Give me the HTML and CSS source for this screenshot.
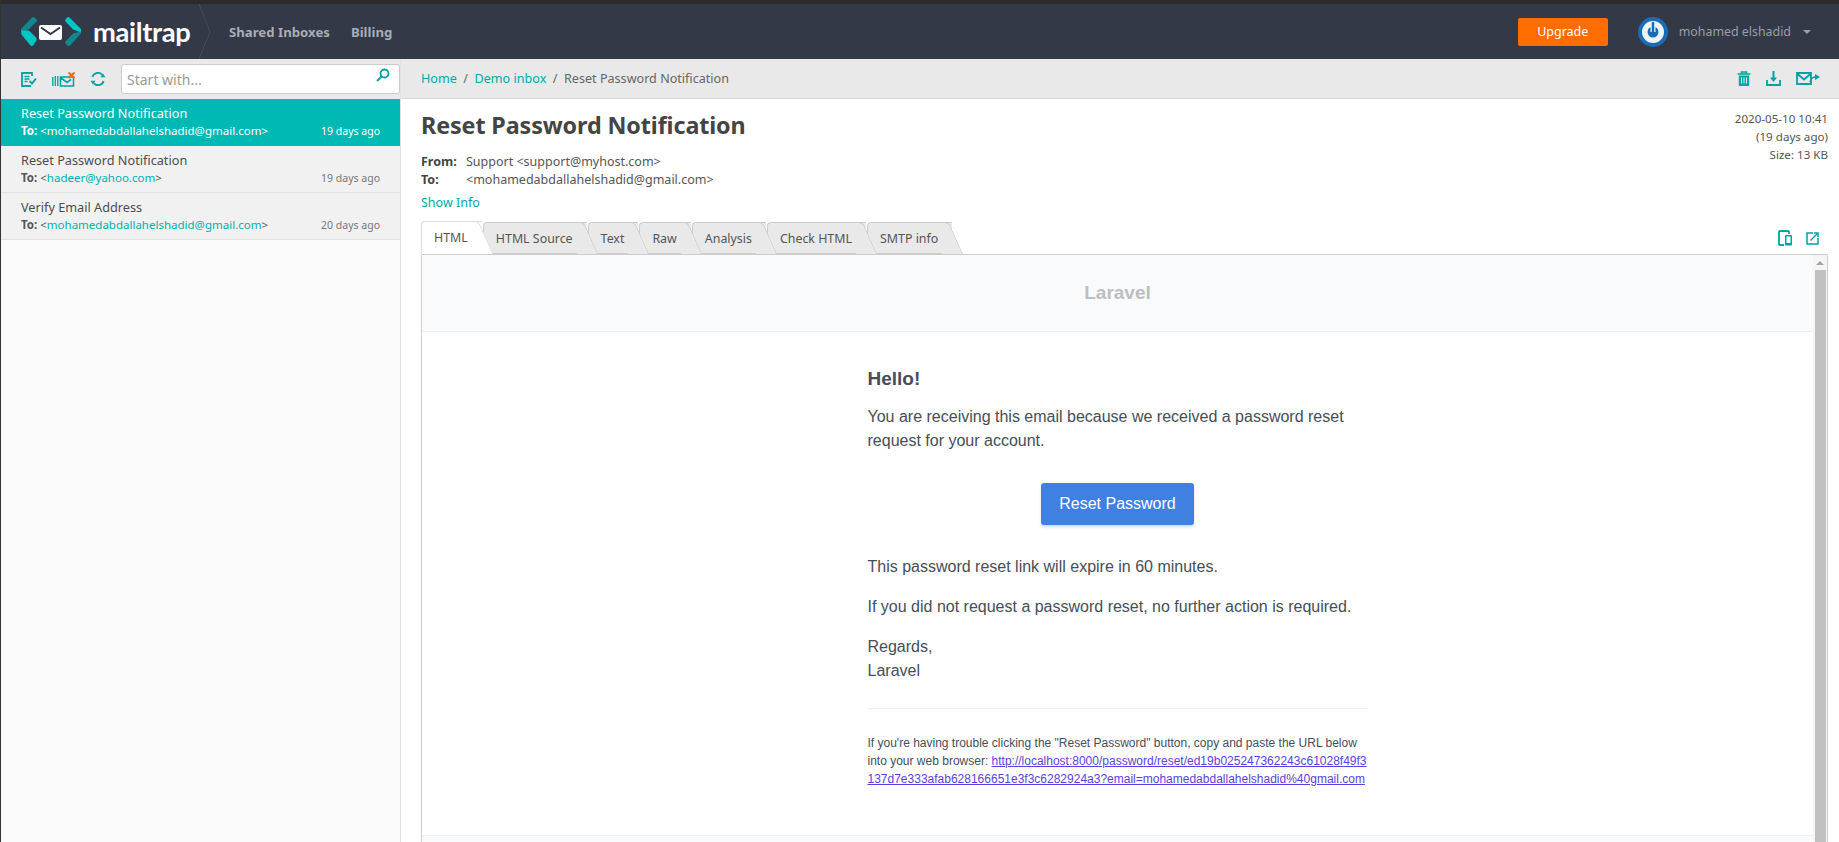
FILE: index.html
```html
<!DOCTYPE html>
<html lang="en">
<head>
  <meta charset="UTF-8">
  <title>Mailtrap</title>
  <link rel="stylesheet" href="styles.css">
</head>
<body>
  <header class="topbar">
    <a class="logo" href="#">
      <svg width="61" height="30" viewBox="0 0 61 30">
        <path d="M11 .5q1.500-1 2.500 0l2 2q1 1 0 2L8 12 1.500 15.500 0 13v-1z" fill="#12878f"/>
        <path d="M0 12l8 0 7.500 7.500 0 2q0 1-1 2l-2.500 3.500q-1 1-2.500 0L.5 16z" fill="#00c6c6" transform="translate(0 1.500)"/>
        <rect x="18" y="8" width="23" height="15" rx="2" fill="#fff"/>
        <path d="M20 10.500l9.500 6.500 9.500-6.500" fill="none" stroke="#333947" stroke-width="2"/>
        <path d="M48.500.5q-1.500-1-2.500 0l-1.500 2q-1 1 0 2L52 12.500 60 15.500V12z" fill="#00c6c6"/>
        <path d="M60 14.500v2L49 28.500q-1 1-2.500 0l-2-2q-1-1 0-2L52 16.500z" fill="#12878f"/>
      </svg>
      <span class="logo-text">mailtrap</span>
    </a>
    <svg class="logo-chevron" width="12" height="55" viewBox="0 0 12 55"><path d="M0 0l11 28-11 27" fill="none" stroke="#474d5b"/></svg>
    <nav class="topnav">
      <a href="#">Shared Inboxes</a>
      <a href="#">Billing</a>
    </nav>
    <div class="topbar-right">
      <a class="upgrade" href="#">Upgrade</a>
      <svg class="avatar" width="30" height="30" viewBox="0 0 30 30">
        <circle cx="15" cy="15" r="15" fill="#1c6cb5"/>
        <circle cx="15" cy="15" r="11" fill="#eef5fa"/>
        <circle cx="15" cy="15" r="5.500" fill="#1c6cb5"/>
        <path d="M15 6v9" stroke="#eef5fa" stroke-width="5"/>
        <path d="M15 5v10" stroke="#1c6cb5" stroke-width="2.500"/>
      </svg>
      <span class="username">mohamed elshadid</span>
      <span class="caret"></span>
    </div>
  </header>

  <div class="layout">
    <aside class="sidebar">
      <div class="side-tools">
        <svg width="16" height="15" viewBox="0 0 16 15" class="tool"><path d="M11 4V1H1v13h9" fill="none" stroke="#00a3a3" stroke-width="1.800"/><path d="M3.500 4.500h5M3.500 7h5M3.500 9.500h3" stroke="#00a3a3" stroke-width="1.300"/><path d="M8.500 9l2.500 2.500 4-5" fill="none" stroke="#00a3a3" stroke-width="2"/></svg>
        <svg width="23" height="15" viewBox="0 0 23 15" class="tool"><path d="M.8 5v9M3.300 4v10M5.800 4v10" stroke="#00a3a3" stroke-width="1.300"/><path d="M8.500 5h13v9h-13zM8.500 5.500l6.500 5 4-3" fill="none" stroke="#00a3a3" stroke-width="1.600"/><path d="M16.500.5l6 5.500M22.500.5l-6 5.500" stroke="#f56a00" stroke-width="2"/></svg>
        <svg width="16" height="14" viewBox="0 0 16 14" class="tool"><path d="M2.500 5a5.500 5 0 0 1 9.500-2.500M13.500 9a5.500 5 0 0 1-9.500 2.500" fill="none" stroke="#00a3a3" stroke-width="1.800"/><path d="M10.500 5.200h5l-2.500-3.700zM5.500 8.800h-5l2.500 3.700z" fill="#00a3a3"/></svg>
        <div class="search">
          <input type="text" placeholder="Start with...">
          <svg width="14" height="14" viewBox="0 0 14 14"><circle cx="8.500" cy="5.500" r="4" fill="none" stroke="#00a3a3" stroke-width="1.800"/><path d="M5.500 8.500L1 13" stroke="#00a3a3" stroke-width="2"/></svg>
        </div>
      </div>
      <ul class="msg-list">
        <li class="msg active">
          <div class="msg-subject">Reset Password Notification</div>
          <div class="msg-meta"><span><b>To:</b> &lt;<a href="#">mohamedabdallahelshadid@gmail.com</a>&gt;</span><time>19 days ago</time></div>
        </li>
        <li class="msg">
          <div class="msg-subject">Reset Password Notification</div>
          <div class="msg-meta"><span><b>To:</b> &lt;<a href="#">hadeer@yahoo.com</a>&gt;</span><time>19 days ago</time></div>
        </li>
        <li class="msg">
          <div class="msg-subject">Verify Email Address</div>
          <div class="msg-meta"><span><b>To:</b> &lt;<a href="#">mohamedabdallahelshadid@gmail.com</a>&gt;</span><time>20 days ago</time></div>
        </li>
      </ul>
    </aside>

    <main class="main">
      <div class="crumbs">
        <div class="crumb-links"><a href="#">Home</a><i>/</i><a href="#">Demo inbox</a><i>/</i><span>Reset Password Notification</span></div>
        <div class="crumb-tools">
          <svg width="14" height="15" viewBox="0 0 14 15"><path d="M.5 3h13M4.500 2.500V1h5v1.500" fill="none" stroke="#00a3a3" stroke-width="1.600"/><path d="M1.800 4.500h10.400V14q0 1-1 1H2.800q-1 0-1-1z" fill="#00a3a3"/><path d="M4.500 6.500v6M7 6.500v6M9.500 6.500v6" stroke="#d8eeee" stroke-width="1.100"/></svg>
          <svg width="15" height="15" viewBox="0 0 15 15"><path d="M1 9v5h13V9" fill="none" stroke="#00a3a3" stroke-width="1.800"/><path d="M7.500 0v8" stroke="#00a3a3" stroke-width="2"/><path d="M4 6.500h7l-3.500 4.500z" fill="#00a3a3"/></svg>
          <svg width="24" height="13" viewBox="0 0 24 13"><path d="M1 1h14v11H1zM1 1.500l7 6 7-6" fill="none" stroke="#00a3a3" stroke-width="1.800"/><path d="M14 10c1-4 3-5 6-5" fill="none" stroke="#00a3a3" stroke-width="1.500"/><path d="M19 2l5 3-5 3z" fill="#00a3a3"/></svg>
        </div>
      </div>

      <div class="message">
        <div class="msg-head">
          <div>
            <h1>Reset Password Notification</h1>
            <table class="addr">
              <tr><th>From:</th><td>Support &lt;support@myhost.com&gt;</td></tr>
              <tr><th>To:</th><td>&lt;mohamedabdallahelshadid@gmail.com&gt;</td></tr>
            </table>
            <a class="show-info" href="#">Show Info</a>
          </div>
          <div class="msg-date">2020-05-10 10:41<br>(19 days ago)<br>Size: 13 KB</div>
        </div>

        <div class="tab-row">
          <ul class="tabs">
            <li class="tab current">HTML</li>
            <li class="tab">HTML Source</li>
            <li class="tab">Text</li>
            <li class="tab">Raw</li>
            <li class="tab">Analysis</li>
            <li class="tab">Check HTML</li>
            <li class="tab">SMTP info</li>
          </ul>
          <div class="tab-tools">
            <svg width="15" height="16" viewBox="0 0 15 16"><path d="M6 15H2q-1 0-1-1V2q0-1 1-1h8q1 0 1 1v2" fill="none" stroke="#00a3a3" stroke-width="1.800"/><rect x="7" y="5" width="7" height="10.500" rx="1" fill="#00a3a3"/><rect x="8.500" y="6.500" width="4" height="6.500" fill="#fff"/></svg>
            <svg width="13" height="13" viewBox="0 0 13 13"><path d="M7 1H1v11h11V6" fill="none" stroke="#00a3a3" stroke-width="1.500"/><path d="M4.500 8.500L11.500 1.500" stroke="#00a3a3" stroke-width="1.500"/><path d="M8 1h4v4" fill="none" stroke="#00a3a3" stroke-width="1.500"/></svg>
          </div>
        </div>

        <div class="preview">
          <div class="mail">
            <div class="mail-head">Laravel</div>
            <div class="mail-body">
              <h2>Hello!</h2>
              <p>You are receiving this email because we received a password reset request for your account.</p>
              <div class="btn-wrap"><a class="reset-btn" href="#">Reset Password</a></div>
              <p>This password reset link will expire in 60 minutes.</p>
              <p>If you did not request a password reset, no further action is required.</p>
              <p>Regards,<br>Laravel</p>
              <div class="subcopy">
                <p>If you're having trouble clicking the "Reset Password" button, copy and paste the URL below into your web browser: <a href="#">http://localhost:8000/password/reset/ed19b025247362243c61028f49f3137d7e333afab628166651e3f3c6282924a3?email=mohamedabdallahelshadid%40gmail.com</a></p>
              </div>
            </div>
            <div class="mail-foot"></div>
          </div>
          <div class="scrollbar"><span class="arrow"></span><span class="thumb"></span></div>
        </div>
      </div>
    </main>
  </div>
</body>
</html>
```
FILE: styles.css
```css
* { box-sizing: border-box; }
html, body { height: 100%; }
body { margin: 0; height: 842px; overflow: hidden; display: flex; flex-direction: column; background: #fff; color: #444; font-family: "Noto Sans", "Open Sans", sans-serif; font-size: 12px; border-top: 4px solid #2b2b2b; border-left: 1px solid #333; }
a { text-decoration: none; color: #00a9a9; }
ul { list-style: none; margin: 0; padding: 0; }

.topbar { height: 55px; flex: none; display: flex; align-items: center; background: #333947; }
.logo { display: flex; align-items: center; margin-left: 20px; width: 178px; }
.logo-text { margin-left: 11px; color: #fff; font-family: "Lato", sans-serif; font-weight: 700; font-size: 27.3px; letter-spacing: -0.3px; }
.topnav { display: flex; gap: 21px; margin-left: 18px; }
.topnav a { color: #a9adb5; font-weight: 700; font-size: 13.2px; }
.topbar-right { margin-left: auto; display: flex; align-items: center; padding-right: 28px; }
.upgrade { width: 90px; height: 28px; line-height: 28px; text-align: center; background: #ff6c00; color: #fff; border-radius: 2px; font-size: 12.5px; }
.avatar { margin-left: 30px; }
.username { margin-left: 11px; color: #9a9ea8; font-size: 12.4px; }
.caret { margin-left: 12px; border: 4px solid transparent; border-top-color: #9a9ea8; border-bottom: 0; }

.layout { flex: 1; display: flex; min-height: 0; }
.sidebar { width: 400px; flex: none; background: #fbfbfb; border-right: 1px solid #e2e2e2; }
.side-tools { height: 40px; display: flex; align-items: center; padding-left: 20px; background: #e9e9e9; }
.tool { margin-right: 15px; flex: none; }
.search { width: 279px; height: 30px; display: flex; align-items: center; background: #fff; border: 1px solid #ccc; border-radius: 3px; padding: 0 9px 0 5px; }
.search input { flex: 1; min-width: 0; border: 0; outline: 0; font: 14px "Noto Sans", sans-serif; color: #444; padding: 0; }
.search input::placeholder { color: #999; opacity: 1; }
.search svg { margin-top: -8px; }
.msg { height: 47px; padding: 6px 20px 0 20px; background: #f1f1f1; border-bottom: 1px solid #e2e2e2; }
.msg-subject { font-size: 12.7px; line-height: 17px; color: #4d4d4d; }
.msg-meta { display: flex; justify-content: space-between; align-items: baseline; font-size: 11.5px; line-height: 17px; color: #555; }
.msg-meta time { color: #777; font-size: 10.5px; }
.msg-meta a { color: #00b0b0; }
.msg.active { background: #00b8b4; border-bottom: 0; }
.msg.active .msg-subject, .msg.active .msg-meta, .msg.active .msg-meta a, .msg.active .msg-meta time { color: #fff; }

.main { flex: 1; min-width: 0; display: flex; flex-direction: column; }
.crumbs { height: 40px; flex: none; display: flex; justify-content: space-between; align-items: center; padding: 0 20px; background: #e9e9e9; border-bottom: 1px solid #d8d8d8; }
.crumb-links { font-size: 12.6px; color: #666; }
.crumb-links i { font-style: normal; margin: 0 6.5px; color: #666; }
.crumb-tools { display: flex; align-items: center; gap: 15px; margin-right: -1px; }

.message { flex: 1; min-height: 0; display: flex; flex-direction: column; padding: 0 11px 0 20px; }
.msg-head { display: flex; justify-content: space-between; }
h1 { margin: 10px 0 0; font-size: 23.3px; line-height: 32px; font-weight: 700; color: #444; letter-spacing: -0.1px; }
.addr { border-collapse: collapse; margin-top: 12px; font-size: 12.5px; }
.addr th { width: 45px; padding: 0; text-align: left; font-weight: 700; line-height: 18px; }
.addr td { padding: 0; line-height: 18px; color: #555; }
.show-info { display: block; margin-top: 5px; font-size: 12.5px; line-height: 18px; }
.msg-date { margin-top: 11px; text-align: right; font-size: 11.6px; line-height: 18px; color: #555; }

.tab-row { display: flex; justify-content: space-between; align-items: flex-end; height: 33px; margin-top: 9px; flex: none; }
.tabs { display: flex; align-items: flex-end; height: 33px; }
.tab { position: relative; height: 32px; padding: 0 14px 0 12px; margin-right: 1px; line-height: 31px; font-size: 12.4px; color: #555; background: #e9e9e9; border: 1px solid #ccc; border-width: 1px 0 1px 1px; border-radius: 4px 0 0 0; }
.tab::after { content: ""; position: absolute; top: -1px; bottom: -1px; right: -4px; width: 20px; background: #e9e9e9; border: 1px solid #ccc; border-width: 1px 1px 0 0; border-radius: 0 5px 0 0; transform: skewX(24deg); z-index: -1; }
.tab:nth-child(1) { z-index: 7; }
.tab:nth-child(2) { z-index: 6; }
.tab:nth-child(3) { z-index: 5; }
.tab:nth-child(4) { z-index: 4; }
.tab:nth-child(5) { z-index: 3; }
.tab:nth-child(6) { z-index: 2; }
.tab:nth-child(7) { z-index: 1; }
.tab.current { background: #fff; border-color: #ddd; border-bottom: 0; height: 33px; }
.tab.current::after { background: #fff; border-color: #ddd; bottom: 0; }
.tab-tools { display: flex; gap: 13px; align-items: center; padding-bottom: 8px; padding-right: 9px; }

.preview { flex: 1; min-height: 0; display: flex; border: 1px solid #ccc; border-bottom: 0; border-radius: 2px 2px 0 0; overflow: hidden; }
.mail { flex: 1; min-width: 0; background: #fff; font-family: "Liberation Sans", Arial, sans-serif; color: #464e58; font-size: 16px; line-height: 24px; }
.mail-head { height: 77px; line-height: 76px; text-align: center; background: #f8fafc; border-bottom: 1px solid #edeff2; color: #bbbfc3; font-size: 19px; font-weight: 700; }
.mail-body { width: 570px; margin: 0 auto; padding: 35px 35px 0 35px; height: 503px; }
.mail-body h2 { margin: 0 0 14px; font-size: 19px; line-height: 24px; font-weight: 700; }
.mail-body p { margin: 0 0 16px; }
.btn-wrap { margin: 30px 0; text-align: center; height: 42px; }
.reset-btn { display: inline-block; width: 153px; height: 42px; line-height: 41px; background: #4080e0; color: #fff; border-radius: 3px; box-shadow: 0 2px 3px rgba(0,0,0,0.16); }
.subcopy { margin-top: 25px; border-top: 1px solid #edeff2; padding-top: 25px; }
.subcopy p { font-size: 12px; line-height: 18px; }
.subcopy a { color: #5b3fdc; text-decoration: underline; word-break: break-all; }
.mail-foot { height: 20px; background: #f8fafc; border-top: 1px solid #edeff2; }
.scrollbar { width: 14px; flex: none; background: #f5f5f5; display: flex; flex-direction: column; align-items: center; padding-top: 6px; }
.arrow { border: 4px solid transparent; border-bottom-color: #a3a3a3; border-top: 0; }
.thumb { width: 11px; flex: 1; margin-top: 5px; background: #c1c1c1; }
```
